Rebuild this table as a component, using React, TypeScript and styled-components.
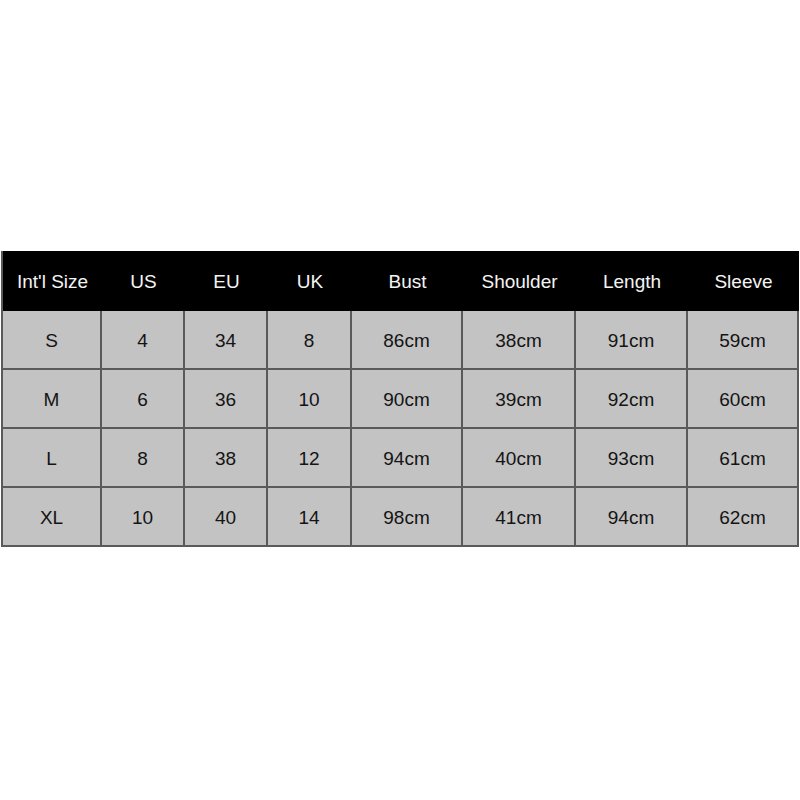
import React from "react";
import styled, { createGlobalStyle } from "styled-components";

const Global = createGlobalStyle`
  html, body { margin: 0; padding: 0; background: #ffffff; }
  body { font-family: "Liberation Sans", Arial, sans-serif; }
`;

const Page = styled.div`
  width: 800px;
  height: 800px;
  padding: 251px 0 0 1px;
  box-sizing: border-box;
`;

const Grid = styled.div`
  display: grid;
  grid-template-columns: 99px 83px 83px 84px 111px 113px 112px 111px;
  grid-template-rows: 60px;
  grid-auto-rows: 59px;
  width: 798px;
  box-sizing: border-box;
  border-left: 2px solid #5a5a5a;
`;

const HeadCell = styled.div`
  background: #000000;
  color: #f4f4f4;
  font-size: 19px;
  display: flex;
  align-items: center;
  justify-content: center;
  padding-top: 2px;
  box-sizing: border-box;
  white-space: nowrap;
`;

const Cell = styled.div`
  background: #c3c3c3;
  color: #141414;
  font-size: 19px;
  display: flex;
  align-items: center;
  justify-content: center;
  padding-top: 3px;
  box-sizing: border-box;
  border-right: 2px solid #5a5a5a;
  border-bottom: 2px solid #5a5a5a;
`;

const headers = ["Int'l Size", "US", "EU", "UK", "Bust", "Shoulder", "Length", "Sleeve"];
const rows = [
  ["S", "4", "34", "8", "86cm", "38cm", "91cm", "59cm"],
  ["M", "6", "36", "10", "90cm", "39cm", "92cm", "60cm"],
  ["L", "8", "38", "12", "94cm", "40cm", "93cm", "61cm"],
  ["XL", "10", "40", "14", "98cm", "41cm", "94cm", "62cm"],
];

export default function App() {
  return (
    <>
      <Global />
      <Page>
        <Grid>
          {headers.map((h) => (
            <HeadCell key={h}>{h}</HeadCell>
          ))}
          {rows.map((r, i) =>
            r.map((c, j) => <Cell key={`${i}-${j}`}>{c}</Cell>)
          )}
        </Grid>
      </Page>
    </>
  );
}
